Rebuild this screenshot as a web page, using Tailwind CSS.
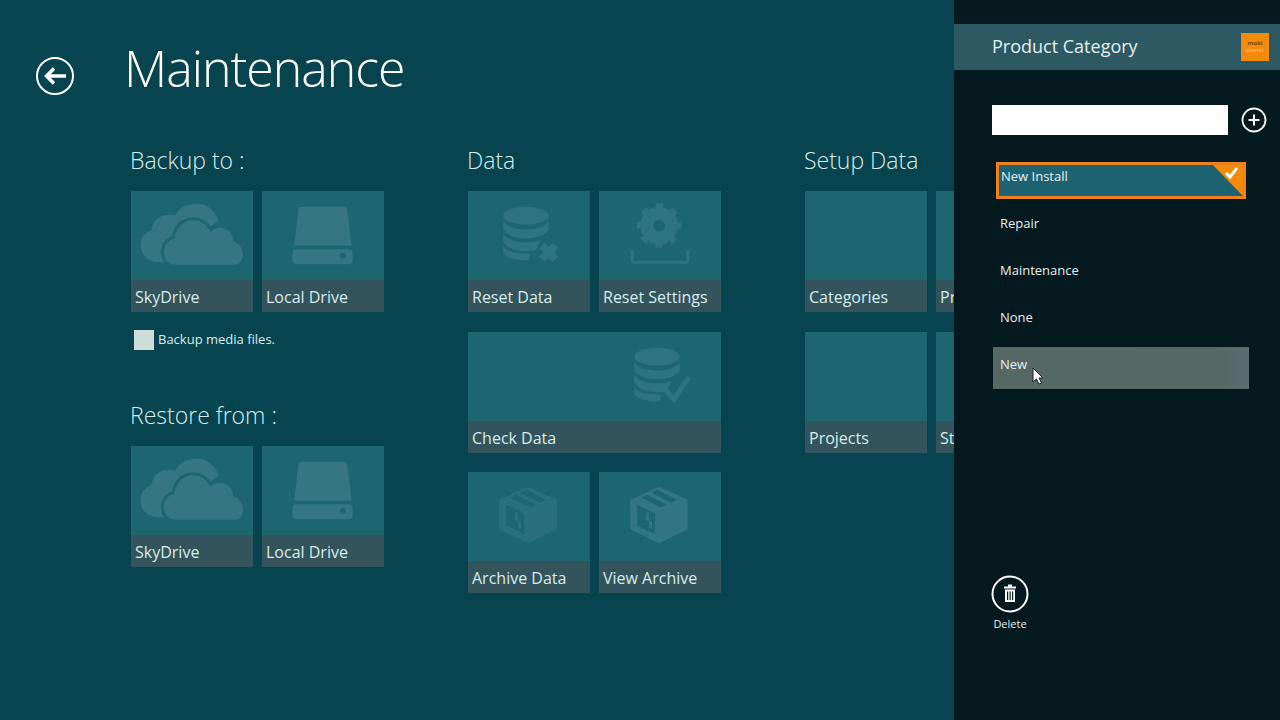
<!DOCTYPE html>
<html lang="en">
<head>
    <meta charset="UTF-8">
    <meta name="viewport" content="width=device-width, initial-scale=1.0">
    <title>Maintenance</title>
    <script src="https://cdn.jsdelivr.net/npm/@tailwindcss/browser@4"></script>
</head>
<body class="bg-[#07444f] font-['Open_Sans',sans-serif] text-[#d6ecec] w-[1280px] h-[720px] overflow-hidden flex">

    <!-- shared icons -->
    <svg class="hidden">
        <symbol id="cloud" viewBox="0 0 122 90">
            <path fill="#367681" d="M24 72C14 70 9 63 9 55c0-9 6-14 11-15 1-10 8-16 18-16 2 0 5 1 6 1 4-8 12-12 22-12 10 0 18 6 22 17L60 50 40 72z"/>
            <path fill="#367681" stroke="#1d6670" stroke-width="3" d="M44 76c-9 0-13-8-13-14 0-9 6-14 11-15 2-12 10-19 20-19 8 0 14 4 18 11 4-3 10-4 15-2 6 2 9 8 9 13 6 2 10 8 10 14 0 7-4 12-10 12z"/>
        </symbol>
        <symbol id="drive" viewBox="0 0 122 90">
            <path fill="#367681" d="M39 16h43q3 0 3.500 3l4.500 36H32l4-36q.500-3 3-3z"/>
            <path fill="#367681" fill-rule="evenodd" d="M35 59h51q5 0 5 4v7q0 4-5 4H35q-5 0-5-4v-7q0-4 5-4zm46 3.500a3 3 0 1 0 .01 0z"/>
        </symbol>
        <symbol id="db" viewBox="0 0 122 90">
            <g fill="#2f7380">
                <ellipse cx="58" cy="25" rx="23" ry="9"/>
                <path d="M35 30c3 6 13 9 23 9s20-3 23-9v8c-2 6-12 10-23 10s-21-4-23-10z"/>
                <path d="M35 43c3 6 13 9 23 9 6 0 11-1 15-3l-5 11c-3 .500-6 .800-10 .800-11 0-21-4-23-10z"/>
                <path d="M35 56c3 5 13 7 23 7l4 1-1 6c-1 .200-2 .200-3 .200-11 0-21-3-23-8z"/>
            </g>
        </symbol>
        <symbol id="db-x" viewBox="0 0 122 90">
            <use href="#db"/>
            <path stroke="#2f7380" stroke-width="8" d="M74 55l14 14m0-14L74 69"/>
        </symbol>
        <symbol id="db-check" viewBox="0 0 122 90">
            <use href="#db"/>
            <path fill="none" stroke="#2f7380" stroke-width="5" d="M66 58l9 10 15-22"/>
        </symbol>
        <symbol id="gear" viewBox="0 0 122 90">
            <g fill="none" stroke="#2f7380">
                <circle cx="60" cy="35" r="12.500" stroke-width="13"/>
                <circle cx="60" cy="35" r="20" stroke-width="5" stroke-dasharray="7 8.700" stroke-dashoffset="3.500"/>
                <path stroke-width="3" d="M33 60v10q0 2 2 2h52q2 0 2-2V60"/>
            </g>
        </symbol>
        <symbol id="box" viewBox="0 0 122 90">
            <path fill="currentColor" fill-rule="evenodd" d="M60 15l29 13v30L60 72 31 58V28zM38 33v21l18 9V42zm12 8v8l3 1v8l-3-2v-6l-3-1v-8zM42 26l20 10 6-3-20-10zm10-5l20 10 6-3-20-10z"/>
        </symbol>
    </svg>

    <!-- Main -->
    <div class="w-[954px] shrink-0 overflow-hidden">
        <div class="flex items-center h-[138px] pl-[35px]">
            <svg class="w-[40px] h-[40px] mt-[14px]" viewBox="0 0 40 40" fill="none" stroke="#fff">
                <circle cx="20" cy="20" r="18" stroke-width="2"/>
                <path stroke-width="3.500" d="M31 20H12m7-7.500L11.500 20l7.500 7.500"/>
            </svg>
            <h1 class="ml-[49px] text-[50px] tracking-[-1px] font-light text-white leading-none -mt-[2px]">Maintenance</h1>
        </div>

        <div class="flex gap-[84px] pl-[131px] w-[1300px]">
            <!-- Backup / restore -->
            <div class="w-[253px] shrink-0">
                <h2 class="text-[23px] font-light leading-[44px] -ml-[1px]">Backup to :</h2>
                <div class="flex gap-[9px] mt-[9px]">
                    <div class="w-[122px] h-[121px] bg-[#1d6670] flex flex-col">
                        <svg class="w-[122px] h-[89px]"><use href="#cloud"/></svg>
                        <div class="h-[32px] bg-[#32545a] pl-[4px] text-[16px] leading-[34px]">SkyDrive</div>
                    </div>
                    <div class="w-[122px] h-[121px] bg-[#1d6670] flex flex-col">
                        <svg class="w-[122px] h-[89px]"><use href="#drive"/></svg>
                        <div class="h-[32px] bg-[#32545a] pl-[4px] text-[16px] leading-[34px]">Local Drive</div>
                    </div>
                </div>
                <div class="flex items-center gap-[4px] mt-[18px] ml-[3px] h-[20px]">
                    <div class="w-[20px] h-[20px] bg-[#cfdcdc]"></div>
                    <span class="text-[13px]">Backup media files.</span>
                </div>
                <h2 class="text-[23px] font-light leading-[44px] mt-[43px] -ml-[1px]">Restore from :</h2>
                <div class="flex gap-[9px] mt-[9px]">
                    <div class="w-[122px] h-[121px] bg-[#1d6670] flex flex-col">
                        <svg class="w-[122px] h-[89px]"><use href="#cloud"/></svg>
                        <div class="h-[32px] bg-[#32545a] pl-[4px] text-[16px] leading-[34px]">SkyDrive</div>
                    </div>
                    <div class="w-[122px] h-[121px] bg-[#1d6670] flex flex-col">
                        <svg class="w-[122px] h-[89px]"><use href="#drive"/></svg>
                        <div class="h-[32px] bg-[#32545a] pl-[4px] text-[16px] leading-[34px]">Local Drive</div>
                    </div>
                </div>
            </div>

            <!-- Data -->
            <div class="w-[253px] shrink-0">
                <h2 class="text-[23px] font-light leading-[44px] -ml-[1px]">Data</h2>
                <div class="grid grid-cols-[122px_122px] gap-x-[9px] gap-y-[19.5px] mt-[9px]">
                    <div class="h-[121px] bg-[#1d6670] flex flex-col">
                        <svg class="w-[122px] h-[89px]"><use href="#db-x"/></svg>
                        <div class="h-[32px] bg-[#32545a] pl-[4px] text-[16px] leading-[34px]">Reset Data</div>
                    </div>
                    <div class="h-[121px] bg-[#1d6670] flex flex-col">
                        <svg class="w-[122px] h-[89px]"><use href="#gear"/></svg>
                        <div class="h-[32px] bg-[#32545a] pl-[4px] text-[16px] leading-[34px]">Reset Settings</div>
                    </div>
                    <div class="col-span-2 h-[121px] bg-[#1d6670] flex flex-col">
                        <svg class="w-[122px] h-[89px] self-end"><use href="#db-check"/></svg>
                        <div class="h-[32px] bg-[#32545a] pl-[4px] text-[16px] leading-[34px]">Check Data</div>
                    </div>
                    <div class="h-[121px] bg-[#1d6670] flex flex-col">
                        <svg class="w-[122px] h-[89px] text-[#2b6f7b]"><use href="#box"/></svg>
                        <div class="h-[32px] bg-[#32545a] pl-[4px] text-[16px] leading-[34px]">Archive Data</div>
                    </div>
                    <div class="h-[121px] bg-[#1d6670] flex flex-col">
                        <svg class="w-[122px] h-[89px] text-[#337682]"><use href="#box"/></svg>
                        <div class="h-[32px] bg-[#32545a] pl-[4px] text-[16px] leading-[34px]">View Archive</div>
                    </div>
                </div>
            </div>

            <!-- Setup data -->
            <div class="w-[253px] shrink-0">
                <h2 class="text-[23px] font-light leading-[44px] -ml-[1px]">Setup Data</h2>
                <div class="grid grid-cols-[122px_122px] gap-x-[9px] gap-y-[19.5px] mt-[9px]">
                    <div class="h-[121px] bg-[#1d6670] flex flex-col justify-end">
                        <div class="h-[32px] bg-[#32545a] pl-[4px] text-[16px] leading-[34px]">Categories</div>
                    </div>
                    <div class="h-[121px] bg-[#1d6670] flex flex-col justify-end">
                        <div class="h-[32px] bg-[#32545a] pl-[4px] text-[16px] leading-[34px]">Products</div>
                    </div>
                    <div class="h-[121px] bg-[#1d6670] flex flex-col justify-end">
                        <div class="h-[32px] bg-[#32545a] pl-[4px] text-[16px] leading-[34px]">Projects</div>
                    </div>
                    <div class="h-[121px] bg-[#1d6670] flex flex-col justify-end">
                        <div class="h-[32px] bg-[#32545a] pl-[4px] text-[16px] leading-[34px]">Status</div>
                    </div>
                </div>
            </div>
        </div>
    </div>

    <!-- Side panel -->
    <div class="relative w-[326px] h-[720px] bg-[#03191e] pt-[24px] flex flex-col">
        <div class="h-[46px] bg-[#2d5a62] flex items-center justify-between pl-[38px] pr-[11px]">
            <span class="text-[18px] text-[#e4f0f0] -mt-[2px]">Product Category</span>
            <div class="w-[28px] h-[28px] bg-[#f58a0b] flex flex-col items-center justify-center text-[6px] leading-[7px]">
                <span class="text-[#7a4a10] font-bold">mobi</span>
                <span class="text-[#fbc27a]">planet</span>
            </div>
        </div>

        <div class="flex items-center mt-[35px] ml-[38px] gap-[13px]">
            <div class="w-[236px] h-[30px] bg-white"></div>
            <svg class="w-[26px] h-[26px]" viewBox="0 0 26 26" fill="none" stroke="#fff">
                <circle cx="13" cy="13" r="11.500" stroke-width="1.800"/>
                <path stroke-width="2" d="M13 7.500v11M7.500 13h11"/>
            </svg>
        </div>

        <div class="flex flex-col gap-[5px] mt-[24px] ml-[39px] w-[256px] text-[13px] text-[#e4f0f0]">
            <div class="h-[42px] p-[3px]">
                <div class="relative h-[37px] bg-[#1f6373] border-[3px] border-[#f0821e] pl-[2px] leading-[22px] overflow-hidden">
                    New Install
                    <svg class="absolute top-0 right-0 w-[30px] h-[31px]" viewBox="0 0 30 31">
                        <path fill="#f58a0b" d="M0 0h30v31z"/>
                        <path fill="none" stroke="#fff" stroke-width="3" d="M13 8l4 4 7-9"/>
                    </svg>
                </div>
            </div>
            <div class="h-[42px] pl-[7px] pt-[7px] leading-[20px]">Repair</div>
            <div class="h-[42px] pl-[7px] pt-[7px] leading-[20px]">Maintenance</div>
            <div class="h-[42px] pl-[7px] pt-[7px] leading-[20px]">None</div>
            <div class="h-[42px] bg-linear-to-r from-[#566764] from-90% to-[#566f72] pl-[7px] pt-[7px] leading-[20px]">New</div>
        </div>

        <div class="flex flex-col items-center w-[112px] mt-[186px]">
            <svg class="w-[38px] h-[38px]" viewBox="0 0 38 38" fill="none" stroke="#fff">
                <circle cx="19" cy="19" r="17.500" stroke-width="2"/>
                <path stroke-width="2" d="M13 12.500h12M17 10.500h4"/>
                <path fill="#fff" stroke="none" fill-rule="evenodd" d="M14 14.500h10V27H14zm2 2v8.500h1.200v-8.500zm2.500 0v8.500h1.200v-8.500zm2.500 0v8.500h1.200v-8.500z"/>
            </svg>
            <span class="text-[11px] mt-[3px] text-[#e4f0f0]">Delete</span>
        </div>

        <!-- mouse pointer -->
        <svg class="absolute left-[78px] top-[367px] w-[12px] h-[18px]" viewBox="0 0 12 18">
            <path fill="#fff" stroke="#222" d="M1 1v14l3.500-3 2.500 5 2.500-1-2.500-5H11z"/>
        </svg>
    </div>

</body>
</html>
